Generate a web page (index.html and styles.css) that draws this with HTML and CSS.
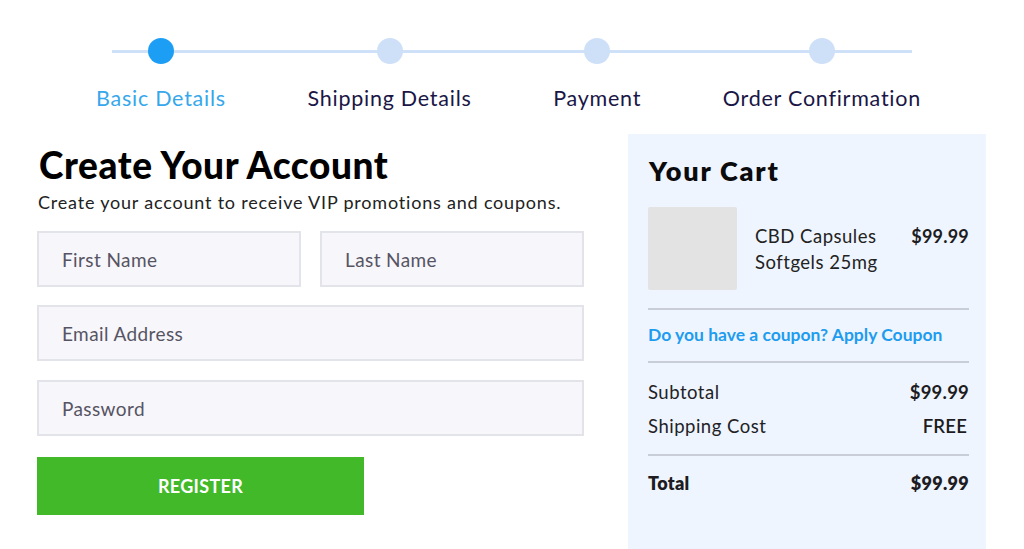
FILE: index.html
```html
<!DOCTYPE html>
<html lang="en">
<head>
<meta charset="utf-8">
<title>Checkout - Basic Details</title>
<link rel="stylesheet" href="styles.css">
</head>
<body>
<div class="page">
  <nav class="stepper">
    <div class="step active"><span class="dot"></span><span class="label">Basic Details</span></div>
    <div class="step"><span class="dot"></span><span class="label">Shipping Details</span></div>
    <div class="step"><span class="dot"></span><span class="label">Payment</span></div>
    <div class="step"><span class="dot"></span><span class="label">Order Confirmation</span></div>
  </nav>

  <main class="main">
    <section class="account">
      <h1 class="title">Create Your Account</h1>
      <p class="subtitle">Create your account to receive VIP promotions and coupons.</p>
      <form class="form">
        <div class="row two">
          <div class="field">First Name</div>
          <div class="field">Last Name</div>
        </div>
        <div class="row"><div class="field">Email Address</div></div>
        <div class="row pw"><div class="field">Password</div></div>
        <button type="button" class="register">REGISTER</button>
      </form>
    </section>

    <aside class="cart">
      <h2 class="cart-title">Your Cart</h2>
      <div class="item">
        <div class="thumb"></div>
        <div class="item-name">CBD Capsules<br>Softgels 25mg</div>
        <div class="item-price">$99.99</div>
      </div>
      <div class="coupon">Do you have a coupon? Apply Coupon</div>
      <div class="totals">
        <div class="line"><span>Subtotal</span><strong>$99.99</strong></div>
        <div class="line"><span>Shipping Cost</span><strong class="free">FREE</strong></div>
      </div>
      <div class="grand"><strong>Total</strong><strong>$99.99</strong></div>
    </aside>
  </main>
</div>
</body>
</html>
```

FILE: styles.css
```css
* { box-sizing: border-box; }
html, body { margin: 0; padding: 0; background: #ffffff; }
body {
  font-family: "Lato", "Open Sans", sans-serif;
  color: #222226;
  height: 549px;
  overflow: hidden;
}
.page { padding-top: 38px; }

.stepper {
  position: relative;
  display: flex;
  justify-content: space-between;
  margin-left: 96px;
  width: 825px;
}
.stepper::before {
  content: "";
  position: absolute;
  left: 16px;
  right: 9px;
  top: 12px;
  height: 3px;
  background: #cfe1f8;
}
.step {
  position: relative;
  display: flex;
  flex-direction: column;
  align-items: center;
}
.dot {
  width: 26px;
  height: 26px;
  border-radius: 50%;
  background: #cde0f7;
}
.step.active .dot { background: #1d9ef5; }
.label {
  margin-top: 22px;
  font-size: 21.5px;
  line-height: 24px;
  color: #1a1646;
  letter-spacing: 0.75px;
  white-space: nowrap;
}
.step.active .label { color: #37a7ec; }

.main {
  display: flex;
  align-items: flex-start;
  margin-top: 24px;
  padding-left: 37px;
}
.account {
  width: 547px;
  padding-top: 11px;
}
.title {
  margin: 0;
  font-size: 37px;
  line-height: 40px;
  font-weight: 900;
  color: #000;
  padding-left: 2px;
  letter-spacing: 0.6px;
}
.subtitle {
  margin: 6px 0 0 1px;
  font-size: 18px;
  line-height: 22px;
  color: #222;
  letter-spacing: 0.8px;
  white-space: nowrap;
}
.form {
  margin-top: 18px;
  display: flex;
  flex-direction: column;
  gap: 18px;
}
.row { display: flex; gap: 19px; }
.row.pw { margin-top: 1px; }
.row.two .field { flex: 1; }
.field {
  flex: 1;
  height: 56px;
  display: flex;
  align-items: center;
  padding-left: 23px;
  background: #f6f6fb;
  border: 2px solid #e3e3ea;
  font-size: 19px;
  letter-spacing: 0.4px;
  color: #565463;
}
.register {
  width: 327px;
  height: 58px;
  margin-top: 3px;
  border: none;
  background: #41b929;
  color: #fff;
  font-family: inherit;
  font-size: 18px;
  font-weight: 700;
  letter-spacing: 0.3px;
  padding: 0;
}

.cart {
  margin-left: 44px;
  width: 358px;
  height: 415px;
  background: #eff5fe;
  padding: 19px 17px 0 20px;
}
.cart-title {
  margin: 0;
  font-size: 27px;
  line-height: 36px;
  font-weight: 800;
  color: #0b0b0d;
  padding-left: 1px;
  letter-spacing: 1.8px;
}
.item {
  display: flex;
  align-items: flex-start;
  margin-top: 18px;
  padding-bottom: 18px;
  border-bottom: 2px solid #c9cdd7;
}
.thumb {
  width: 89px;
  height: 83px;
  background: #e3e3e3;
  border-radius: 2px;
}
.item-name {
  margin-left: 18px;
  margin-top: 16px;
  font-size: 18.5px;
  line-height: 26px;
  letter-spacing: 0.5px;
  color: #222;
  flex: 1;
}
.item-price {
  margin-top: 16px;
  font-size: 18px;
  line-height: 26px;
  font-weight: 700;
  color: #1c1c22;
  letter-spacing: 0.2px;
}
.coupon {
  padding: 13px 0 14px;
  font-size: 17.5px;
  line-height: 24px;
  font-weight: 700;
  color: #1d9cf0;
  border-bottom: 2px solid #c9cdd7;
  white-space: nowrap;
}
.totals {
  padding: 12px 0 11px;
  border-bottom: 2px solid #c9cdd7;
}
.line {
  display: flex;
  justify-content: space-between;
  font-size: 18.5px;
  line-height: 34px;
  letter-spacing: 0.5px;
}
.line strong { font-weight: 700; color: #1c1c22; letter-spacing: 0.2px; }
.line .free { font-weight: 600; padding-right: 2px; }
.grand {
  display: flex;
  justify-content: space-between;
  padding-top: 13px;
  font-size: 18px;
  line-height: 28px;
}
.grand strong { font-weight: 800; color: #1c1c22; letter-spacing: 0.3px; }
```
